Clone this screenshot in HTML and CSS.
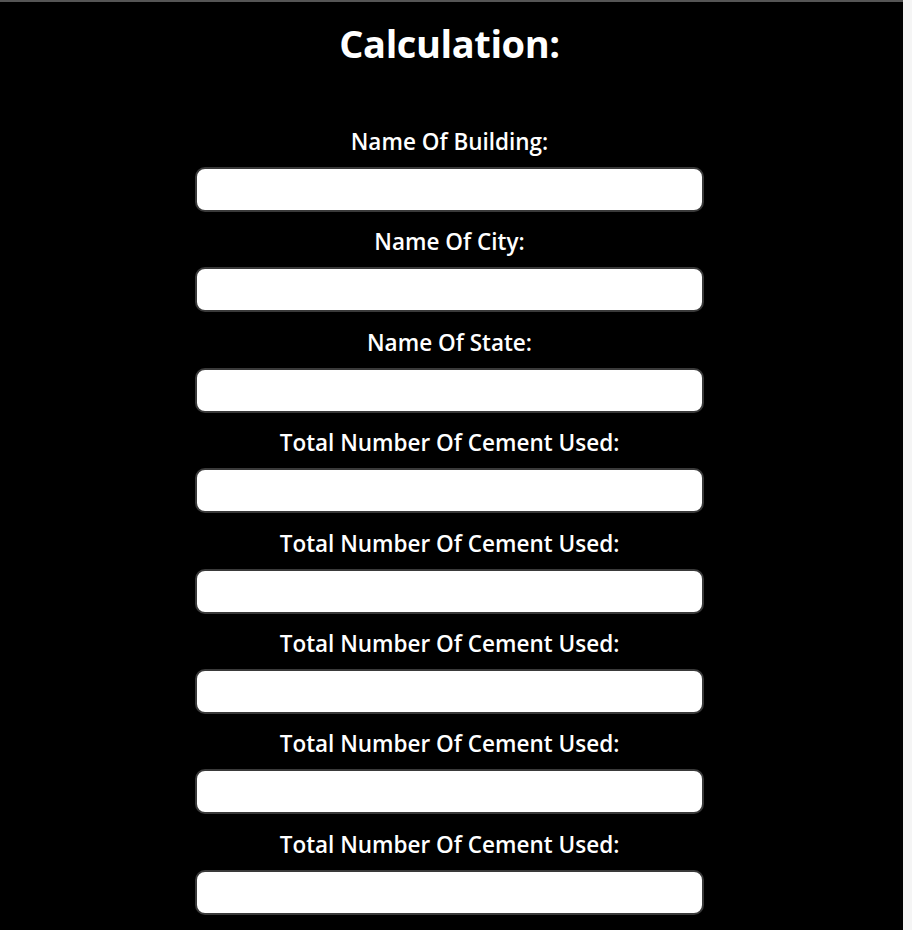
FILE: index.html
```html
<!DOCTYPE html>
<html>
<head>
<meta charset="utf-8">
<link rel="stylesheet" href="styles.css">
</head>
<body>
<main class="page">
  <h1 class="title">Calculation:</h1>
  <form class="form">
    <div class="field"><label class="label">Name Of Building:</label><input class="input" type="text"></div>
    <div class="field"><label class="label">Name Of City:</label><input class="input" type="text"></div>
    <div class="field"><label class="label">Name Of State:</label><input class="input" type="text"></div>
    <div class="field"><label class="label">Total Number Of Cement Used:</label><input class="input" type="text"></div>
    <div class="field"><label class="label">Total Number Of Cement Used:</label><input class="input" type="text"></div>
    <div class="field"><label class="label">Total Number Of Cement Used:</label><input class="input" type="text"></div>
    <div class="field"><label class="label">Total Number Of Cement Used:</label><input class="input" type="text"></div>
    <div class="field"><label class="label">Total Number Of Cement Used:</label><input class="input" type="text"></div>
  </form>
</main>
</body>
</html>
```
FILE: styles.css
```css
html, body {
  margin: 0;
  padding: 0;
  background: #f5f5f5;
  height: 100%;
  overflow: hidden;
}
.page {
  width: 903px;
  min-height: 930px;
  background: #000;
  border-top: 2px solid #555;
  box-sizing: border-box;
  color: #fff;
  font-family: "Open Sans", "Noto Sans", sans-serif;
  padding-right: 4px;
}
.title {
  margin: 0;
  padding-top: 11px;
  height: 60px;
  line-height: 60px;
  font-size: 38px;
  letter-spacing: -0.4px;
  font-weight: 700;
  text-align: center;
}
.form {
  margin-top: 54px;
  display: flex;
  flex-direction: column;
  align-items: center;
  gap: 15.4px;
}
.field {
  display: flex;
  flex-direction: column;
  align-items: center;
  gap: 10px;
}
.label {
  font-size: 22.5px;
  font-weight: 600;
  line-height: 30px;
  height: 30px;
}
.input {
  width: 509px;
  height: 45px;
  box-sizing: border-box;
  border: 2px solid #3a3a3a;
  border-radius: 10px;
  background: #fff;
  margin: 0;
  padding: 0 10px;
  outline: none;
}
```
